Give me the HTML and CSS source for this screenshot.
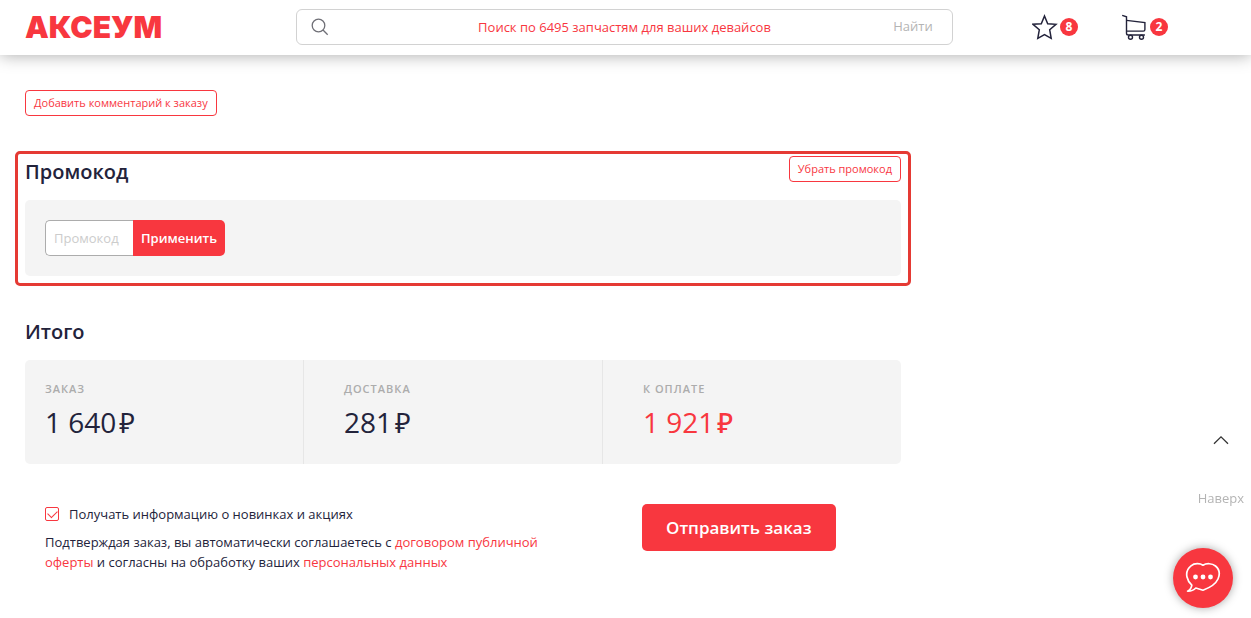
FILE: index.html
```html
<!DOCTYPE html>
<html lang="ru">
<head>
    <meta charset="UTF-8">
    <meta name="viewport" content="width=device-width, initial-scale=1.0">
    <title>Аксеум - оформление заказа</title>
    <link rel="stylesheet" href="styles.css">
</head>
<body>

    <header class="header">
        <a href="#" class="logo">АКСЕУМ</a>

        <form class="search">
            <label for="search" class="search-icon" aria-label="Поиск">
                <svg width="18" height="18" viewBox="0 0 18 18" fill="none" stroke="#6f6f76" stroke-width="1.3">
                    <circle cx="7.5" cy="7.5" r="6.3"/>
                    <path d="M12 12l4.7 4.7"/>
                </svg>
            </label>
            <input type="text" id="search" placeholder="Поиск по 6495 запчастям для ваших девайсов">
            <button type="button" class="search-btn">Найти</button>
        </form>

        <nav class="actions">
            <a href="#" class="action" aria-label="Избранное">
                <svg width="26" height="26" viewBox="0 0 26 26" fill="none" stroke="#23233b" stroke-width="1.5" stroke-linejoin="miter">
                    <path d="M12.5 2l3.2 7.7 8.3.6-6.3 5.5 1.5 8.5-6.700-3.600-6.700 3.600 1.500-8.500L1 10.300l8.300-.6z"/>
                </svg>
                <span class="badge">8</span>
            </a>
            <a href="#" class="action" aria-label="Корзина">
                <svg width="26" height="26" viewBox="0 0 26 26" fill="none" stroke="#23233b" stroke-width="1.4">
                    <path d="M.2 1.300l4.300 1.500v16.400q0 1.800 1.800 1.800h16.600"/>
                    <path d="M4.500 6.400l18.400 2.200v6.900q0 1.600-1.600 1.600H4.500"/>
                    <circle cx="8.500" cy="23.300" r="2"/>
                    <circle cx="19.500" cy="23.300" r="2"/>
                </svg>
                <span class="badge">2</span>
            </a>
        </nav>
    </header>

    <main class="content">
        <button type="button" class="btn-outline">Добавить комментарий к заказу</button>

        <section class="promo">
            <div class="promo-head">
                <h2>Промокод</h2>
                <button type="button" class="btn-outline">Убрать промокод</button>
            </div>
            <form class="panel promo-form">
                <input type="text" class="promo-input" placeholder="Промокод" aria-label="Промокод">
                <button type="button" class="promo-btn">Применить</button>
            </form>
        </section>

        <section class="total">
            <h2>Итого</h2>
            <div class="panel sums">
                <div class="sum">
                    <div class="sum-label">Заказ</div>
                    <div class="sum-value">1 640<span class="rub">₽</span></div>
                </div>
                <div class="sum">
                    <div class="sum-label">Доставка</div>
                    <div class="sum-value">281<span class="rub">₽</span></div>
                </div>
                <div class="sum sum-pay">
                    <div class="sum-label">К оплате</div>
                    <div class="sum-value">1 921<span class="rub">₽</span></div>
                </div>
            </div>
        </section>

        <form class="confirm">
            <div class="agree">
                <label class="check">
                    <input type="checkbox" checked>
                    Получать информацию о новинках и акциях
                </label>
                <p>Подтверждая заказ, вы автоматически соглашаетесь с <a href="#">договором публичной оферты</a> и согласны на обработку ваших <a href="#">персональных данных</a></p>
            </div>
            <div class="submit">
                <button type="button" class="submit-btn">Отправить заказ</button>
            </div>
        </form>
    </main>

    <a href="#" class="to-top">
        <svg width="16" height="10" viewBox="0 0 16 10" fill="none" stroke="#333" stroke-width="1.3">
            <path d="M1 8.8l7-7 7 7"/>
        </svg>
        Наверх
    </a>

    <button type="button" class="chat" aria-label="Чат">
        <svg width="36" height="32" viewBox="0 0 36 32" fill="none" stroke="#fff" stroke-width="1.7" stroke-linejoin="round">
            <path d="M18 3.2C15 1.2 9.500 1 6 3.800C2.500 6.600 1 10.500 2 15C2.700 18.500 4.500 21 6.800 23.200C6.500 25.800 5 28 2.600 29.200C6 29.300 8.800 28.200 10.800 26L18 28.200C24 26 30.500 22.500 33 17C35.200 12 34 7 30.500 4C27 1.200 21.500 1 18 3.200z"/>
            <g fill="#fff" stroke="none">
                <circle cx="10.500" cy="15" r="2.400"/>
                <circle cx="18" cy="15" r="2.400"/>
                <circle cx="25.500" cy="15" r="2.400"/>
            </g>
        </svg>
    </button>

</body>
</html>
```

FILE: styles.css
```css
* { box-sizing: border-box; }
body { margin: 0; font-family: "Open Sans", "Noto Sans", sans-serif; font-size: 13px; line-height: 20px; color: #23233b; background-color: #fff; }
a { color: #f8373f; text-decoration: none; }
button, input { font-family: inherit; font-size: 13px; }
button { cursor: pointer; }
h2 { margin: 0; font-size: 20px; line-height: 28px; font-weight: 600; }

/* header */
.header { display: grid; grid-template-columns: 271px 1fr 273px; align-items: center; height: 55px; padding: 0 25px 2px; background-color: #fff; box-shadow: 0 0 16px rgba(0, 0, 0, 0.35); }
.logo { font-family: Inter, sans-serif; font-size: 30px; line-height: 32px; font-weight: 900; }
.search { display: grid; grid-template-columns: 78px 1fr 78px; align-items: center; height: 36px; border: 1px solid #d2d2d2; border-radius: 6px; }
.search-icon { display: flex; padding-left: 14px; }
.search input { width: 100%; padding: 0; border: none; outline: none; background: none; text-align: center; }
.search input::placeholder { color: #f8373f; }
.search-btn { padding: 0 0 2px; border: none; background: none; color: #b4b4b4; }
.actions { display: flex; gap: 44px; padding-left: 79px; }
.action { display: flex; align-items: center; gap: 2px; }
.badge { width: 18px; height: 18px; border-radius: 50%; background-color: #f8373f; color: #fff; font-size: 12px; line-height: 18px; font-weight: 700; text-align: center; }

/* order */
.content { margin-right: 350px; padding: 35px 0 40px 25px; }
.btn-outline { display: block; height: 26px; padding: 0 8px 2px; border: 1px solid #f8373f; border-radius: 4px; background-color: #fff; color: #f8373f; font-size: 11px; }
.promo { margin: 35px -10px 0; padding: 2px 7px 7px; border: 3px solid #e53a34; border-radius: 5px; }
.promo-head { display: flex; justify-content: space-between; align-items: flex-start; height: 44px; }
.promo-head h2 { padding-top: 2px; }
.panel { background-color: #f4f4f4; border-radius: 5px; }
.promo-form { display: flex; padding: 20px; }
.promo-input { width: 88px; height: 36px; padding: 0 8px; border: 1px solid #acacac; border-right: none; border-radius: 5px 0 0 5px; outline: none; }
.promo-input::placeholder { color: #ccc; }
.promo-btn { height: 36px; padding: 0 8px; border: none; border-radius: 0 5px 5px 0; background-color: #f8373f; color: #fff; font-weight: 600; }
.total { margin-top: 32px; }
.sums { display: flex; margin-top: 14px; }
.sum { flex: 1; height: 104px; padding: 20px 0 20px 40px; border-left: 1px solid #e6e6e6; }
.sum:first-child { padding-left: 20px; border-left: none; }
.sum-label { color: #acacac; font-size: 11px; line-height: 18px; font-weight: 600; letter-spacing: 1px; text-transform: uppercase; }
.sum-value { margin-top: 5px; font-size: 28px; line-height: 38px; }
.sum-pay .sum-value { color: #f8373f; font-weight: 500; }
.rub { margin-left: 3px; font-size: 27px; }

.confirm { display: flex; margin-top: 40px; }
.agree { flex: 1; padding: 0 80px 0 20px; }
.agree p { margin: 8px 0 0; }
.check { display: flex; align-items: center; gap: 10px; }
.check input { appearance: none; display: flex; justify-content: center; width: 14px; height: 14px; margin: 0; border: 1px solid #f8373f; border-radius: 2px; }
.check input:checked::before { content: ""; width: 8px; height: 5px; margin-top: 2px; border: solid #f8373f; border-width: 0 0 1px 1px; transform: rotate(-45deg); }
.submit { flex: 0 0 259px; }
.submit-btn { height: 47px; padding: 0 24px; border: none; border-radius: 5px; background-color: #f8373f; color: #fff; font-size: 17px; font-weight: 600; }

/* floating controls */
.to-top { position: fixed; right: 7px; bottom: 110px; display: flex; flex-direction: column; align-items: center; gap: 43px; color: #b4b4b4; }
.chat { position: fixed; right: 18px; bottom: 10px; display: flex; align-items: center; justify-content: center; width: 60px; height: 60px; padding: 0; border: none; border-radius: 50%; background-color: #f8373f; box-shadow: 0 0 10px rgba(0, 0, 0, 0.35); }
```
